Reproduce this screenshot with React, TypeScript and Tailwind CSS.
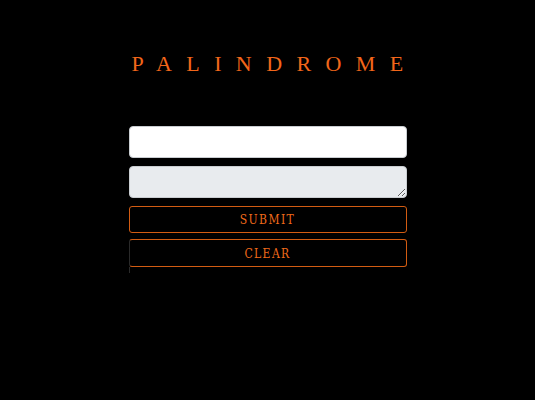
export default function App() {
  return (
    <div className="min-h-[400px] w-full bg-black font-['Liberation_Serif',serif]">
      <div className="mx-auto flex w-[278px] flex-col pt-[51px]">
        <h1 className="mr-[-14px] text-center text-[22px] leading-[26px] tracking-[14.4px] text-[#f2661a]">
          PALINDROME
        </h1>
        <input
          type="text"
          className="mt-[49px] h-[32px] w-full rounded-[4px] border border-[#c9cdd1] bg-white px-2 outline-none"
        />
        <textarea className="mt-[8px] block h-[32px] w-full rounded-[4px] border border-[#c9cdd1] bg-[#e8ebee] px-2" />
        <button className="mt-[8px] h-[27px] w-full rounded-[3px] border border-[#d25c12] bg-black pt-px font-['DejaVu_Serif_Condensed','DejaVu_Serif',serif] text-[12px] tracking-[1.4px] text-[#f06a1a]">
          SUBMIT
        </button>
        <button className="mt-[6px] h-[28px] w-full rounded-[3px] border border-[#d25c12] border-l-[#2a2a2a] bg-black pt-px font-['DejaVu_Serif_Condensed','DejaVu_Serif',serif] text-[12px] tracking-[1.4px] text-[#f06a1a]">
          CLEAR
        </button>
        <div className="h-[6px] w-px bg-[#2a2a2a]" />
      </div>
    </div>
  );
}
